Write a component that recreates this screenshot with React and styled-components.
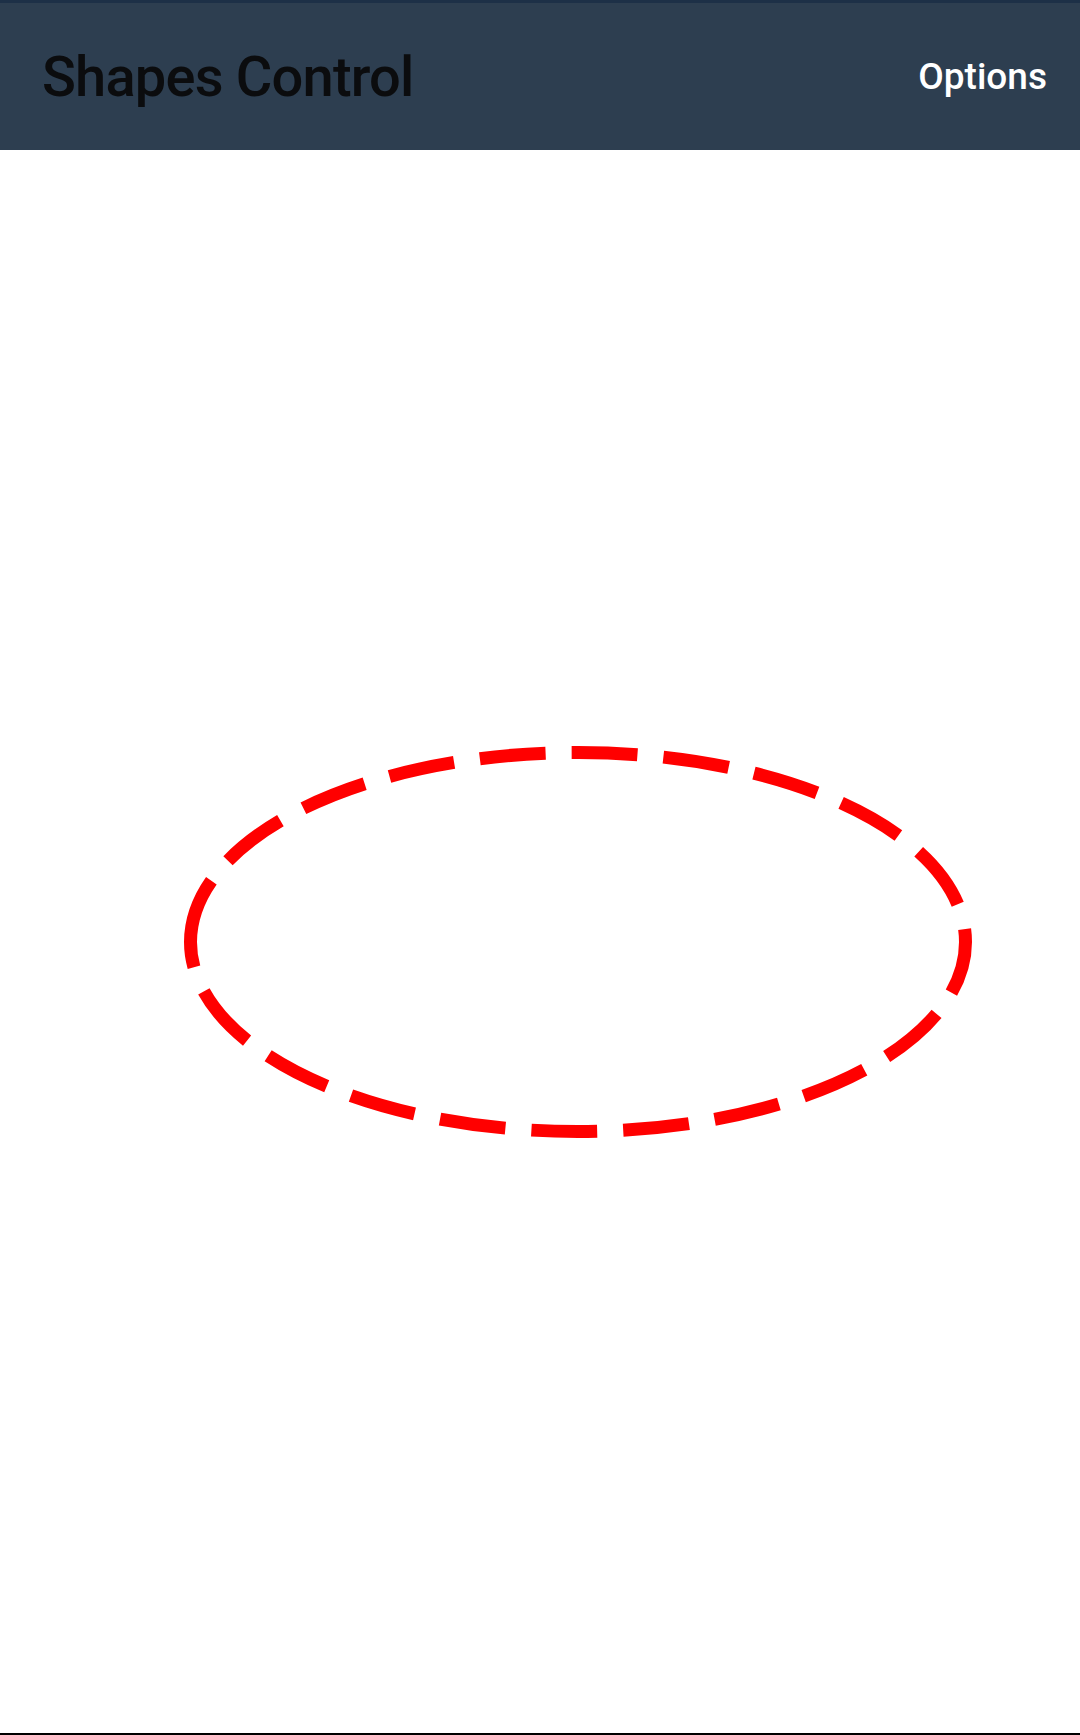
import React from "react";
import styled, { createGlobalStyle } from "styled-components";

const GlobalStyle = createGlobalStyle`
  html, body {
    margin: 0;
    padding: 0;
    background: #fff;
  }
  body {
    font-family: Roboto, "Liberation Sans", sans-serif;
  }
`;

const Page = styled.div`
  display: flex;
  flex-direction: column;
  height: 1735px;
  box-sizing: border-box;
  border-bottom: 2px solid #000;
`;

const Toolbar = styled.header`
  display: flex;
  justify-content: space-between;
  align-items: center;
  height: 150px;
  box-sizing: border-box;
  border-top: 3px solid #1d3047;
  background-color: #2d3e50;
  padding: 0 33px 0 42px;
`;

const Title = styled.h1`
  margin: 0;
  font-size: 56px;
  font-weight: 500;
  color: #0b0c0e;
  letter-spacing: -0.8px;
`;

const MenuButton = styled.button`
  border: none;
  background: none;
  padding: 0;
  font-family: inherit;
  font-size: 37px;
  font-weight: 500;
  color: #fff;
  cursor: pointer;
`;

const Canvas = styled.main`
  flex: 1;
  display: flex;
  align-items: center;
  justify-content: center;
  padding-left: 75px;
`;

const RX = 387.5;
const RY = 189.5;
const SW = 13;

function DashedEllipse({ color }) {
  const w = RX * 2 + SW;
  const h = RY * 2 + SW;
  const cx = w / 2;
  const cy = h / 2;
  const d = `M ${cx - RX} ${cy} A ${RX} ${RY} 0 0 1 ${cx + RX} ${cy} A ${RX} ${RY} 0 0 1 ${cx - RX} ${cy} Z`;
  return (
    <svg width={w} height={h} viewBox={`0 0 ${w} ${h}`}>
      <path d={d} fill="none" stroke={color} strokeWidth={SW} strokeDasharray="66 26" />
    </svg>
  );
}

export default function App() {
  return (
    <>
      <GlobalStyle />
      <Page>
        <Toolbar>
          <Title>Shapes Control</Title>
          <MenuButton>Options</MenuButton>
        </Toolbar>
        <Canvas>
          <DashedEllipse color="#ff0000" />
        </Canvas>
      </Page>
    </>
  );
}
